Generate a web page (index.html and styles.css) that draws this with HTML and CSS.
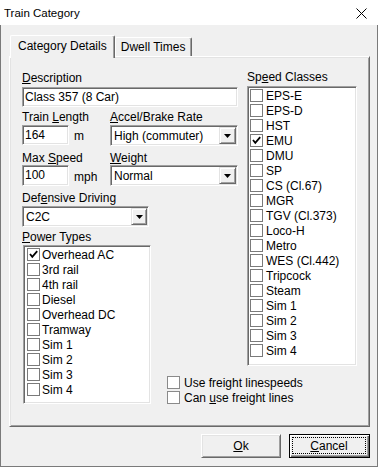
FILE: index.html
```html
<!DOCTYPE html>
<html lang="en">
<head>
    <meta charset="UTF-8">
    <title>Train Category</title>
    <link rel="stylesheet" href="styles.css">
</head>
<body>
    <div class="window">
        <div class="titlebar">
            <span class="title">Train Category</span>
            <svg class="close" width="11" height="11" viewBox="0 0 11 11">
                <path d="M0.5 0.5 L10.5 10.5 M10.5 0.5 L0.5 10.5" stroke="#000" stroke-width="1" fill="none"/>
            </svg>
        </div>

        <div class="client">
            <div class="tabs">
                <div class="tab active">Category Details</div>
                <div class="tab">Dwell Times</div>
            </div>

            <div class="page">
                <div class="col-left">
                    <div class="label"><u>D</u>escription</div>
                    <div class="edit desc">Class 357 (8 Car)</div>

                    <div class="row row-length">
                        <div class="field-short">
                            <div class="label lbl-gap">Train <u>L</u>ength</div>
                            <div class="with-unit">
                                <div class="edit short">164</div>
                                <span class="unit">m</span>
                            </div>
                        </div>
                        <div class="field-wide">
                            <div class="label lbl-gap"><u>A</u>ccel/Brake Rate</div>
                            <div class="combo">
                                <span class="combo-text">High (commuter)</span>
                                <span class="combo-btn"><svg width="7" height="4" viewBox="0 0 7 4"><polygon points="0,0 7,0 3.5,4" fill="#000"/></svg></span>
                            </div>
                        </div>
                    </div>

                    <div class="row row-speed">
                        <div class="field-short">
                            <div class="label">Max <u>S</u>peed</div>
                            <div class="with-unit">
                                <div class="edit short tall">100</div>
                                <span class="unit">mph</span>
                            </div>
                        </div>
                        <div class="field-wide">
                            <div class="label"><u>W</u>eight</div>
                            <div class="combo">
                                <span class="combo-text">Normal</span>
                                <span class="combo-btn"><svg width="7" height="4" viewBox="0 0 7 4"><polygon points="0,0 7,0 3.5,4" fill="#000"/></svg></span>
                            </div>
                        </div>
                    </div>

                    <div class="defensive">
                        <div class="label lbl-gap">Def<u>e</u>nsive Driving</div>
                        <div class="combo small">
                            <span class="combo-text">C2C</span>
                            <span class="combo-btn"><svg width="7" height="4" viewBox="0 0 7 4"><polygon points="0,0 7,0 3.5,4" fill="#000"/></svg></span>
                        </div>
                    </div>

                    <div class="bottom-row">
                        <div class="power">
                            <div class="label lbl-gap"><u>P</u>ower Types</div>
                            <div class="list power-list">
                                <div class="item"><span class="cb"><svg width="11" height="11" viewBox="0 0 11 11"><path d="M2 5 L4.3 7.8 L9.2 2.2" stroke="#000" stroke-width="1.8" fill="none"/></svg></span>Overhead AC</div>
                                <div class="item"><span class="cb"></span>3rd rail</div>
                                <div class="item"><span class="cb"></span>4th rail</div>
                                <div class="item"><span class="cb"></span>Diesel</div>
                                <div class="item"><span class="cb"></span>Overhead DC</div>
                                <div class="item"><span class="cb"></span>Tramway</div>
                                <div class="item"><span class="cb"></span>Sim 1</div>
                                <div class="item"><span class="cb"></span>Sim 2</div>
                                <div class="item"><span class="cb"></span>Sim 3</div>
                                <div class="item"><span class="cb"></span>Sim 4</div>
                            </div>
                        </div>
                        <div class="freight">
                            <div class="option"><span class="cb"></span><span>Use freight linespeeds</span></div>
                            <div class="option"><span class="cb"></span><span>Can <u>u</u>se freight lines</span></div>
                        </div>
                    </div>
                </div>

                <div class="col-right">
                    <div class="label">Sp<u>e</u>ed Classes</div>
                    <div class="list speed-list">
                        <div class="item"><span class="cb"></span>EPS-E</div>
                        <div class="item"><span class="cb"></span>EPS-D</div>
                        <div class="item"><span class="cb"></span>HST</div>
                        <div class="item"><span class="cb"><svg width="11" height="11" viewBox="0 0 11 11"><path d="M2 5 L4.3 7.8 L9.2 2.2" stroke="#000" stroke-width="1.8" fill="none"/></svg></span>EMU</div>
                        <div class="item"><span class="cb"></span>DMU</div>
                        <div class="item"><span class="cb"></span>SP</div>
                        <div class="item"><span class="cb"></span>CS (Cl.67)</div>
                        <div class="item"><span class="cb"></span>MGR</div>
                        <div class="item"><span class="cb"></span>TGV (Cl.373)</div>
                        <div class="item"><span class="cb"></span>Loco-H</div>
                        <div class="item"><span class="cb"></span>Metro</div>
                        <div class="item"><span class="cb"></span>WES (Cl.442)</div>
                        <div class="item"><span class="cb"></span>Tripcock</div>
                        <div class="item"><span class="cb"></span>Steam</div>
                        <div class="item"><span class="cb"></span>Sim 1</div>
                        <div class="item"><span class="cb"></span>Sim 2</div>
                        <div class="item"><span class="cb"></span>Sim 3</div>
                        <div class="item"><span class="cb"></span>Sim 4</div>
                    </div>
                </div>
            </div>

            <div class="buttons">
                <div class="btn ok"><u>O</u>k</div>
                <div class="btn cancel"><span class="focus"><span><u>C</u>ancel</span></span></div>
            </div>
        </div>
    </div>
</body>
</html>
```

FILE: styles.css
```css
* {
    box-sizing: border-box;
}

body {
    margin: 0;
    font-family: 'Liberation Sans', Arial, sans-serif;
    font-size: 12px;
    color: #000;
    background: #f0f0f0;
}

.window {
    width: 378px;
    height: 467px;
    display: flex;
    flex-direction: column;
}

.titlebar {
    height: 25px;
    background: #fff;
    display: flex;
    align-items: center;
    justify-content: space-between;
    padding: 1px 11px 0 4px;
}

.title {
    font-size: 11.5px;
}

.client {
    flex: 1;
    background: #f0f0f0;
    border: 1px solid #7a7a7a;
    border-top: none;
    padding: 10px 7px 0 8px;
}

/* tab strip */
.tabs {
    display: flex;
    align-items: flex-end;
    height: 21px;
    padding-left: 1px;
}

.tab {
    height: 19px;
    padding: 2px 6px 0 5px;
    line-height: 14px;
    background: #f0f0f0;
    border: 1px solid;
    border-color: #fff #696969 transparent #fff;
    border-bottom: none;
    box-shadow: inset -1px 0 0 #a0a0a0;
    border-radius: 2px 2px 0 0;
}

.tab.active {
    height: 23px;
    padding: 3px 7px 0 7px;
    margin-bottom: -2px;
    position: relative;
    z-index: 1;
}

.page {
    height: 371px;
    display: flex;
    gap: 9px;
    padding: 13px 12px 0 12px;
    border: 1px solid;
    border-color: #fff #696969 #696969 #fff;
    box-shadow: inset 1px 1px 0 #e3e3e3, inset -1px -1px 0 #a0a0a0;
}

.col-left {
    width: 216px;
    margin-top: 1px;
}

.col-right {
    width: 112px;
}

.label {
    line-height: 14px;
    white-space: nowrap;
    margin-bottom: 2px;
}

.label.lbl-gap {
    margin-bottom: 1px;
}

.row-speed .label {
    margin-bottom: 0;
}

/* sunken controls */
.edit,
.combo,
.list {
    background: #fff;
    border: 1px solid;
    border-color: #a0a0a0 #fff #fff #a0a0a0;
    box-shadow: inset 1px 1px 0 #696969, inset -1px -1px 0 #e3e3e3;
}

.edit {
    height: 20px;
    line-height: 18px;
    padding: 0 2px;
    white-space: nowrap;
}

.edit.short {
    width: 47px;
}

.edit.tall {
    height: 21px;
    line-height: 19px;
}

.row {
    display: flex;
}

.row-length {
    margin-top: 3px;
}

.row-speed {
    margin-top: 5px;
}

.field-short {
    width: 88px;
}

.field-wide {
    flex: 1;
}

.with-unit {
    display: flex;
    align-items: flex-end;
    gap: 5px;
}

.unit {
    line-height: 15px;
    margin-bottom: 1px;
}

.combo {
    height: 21px;
    display: flex;
    padding: 1px;
}

.combo.small {
    width: 127px;
}

.combo-text {
    flex: 1;
    padding-left: 2px;
    line-height: 19px;
    white-space: nowrap;
}

.combo-btn {
    width: 17px;
    height: 17px;
    display: flex;
    align-items: center;
    justify-content: center;
    background: #f0f0f0;
    border: 1px solid;
    border-color: #e3e3e3 #696969 #696969 #e3e3e3;
    box-shadow: inset 1px 1px 0 #fff, inset -1px -1px 0 #a0a0a0;
}

.combo.small .combo-btn {
    width: 16px;
}

.defensive {
    margin-top: 5px;
}

.bottom-row {
    display: flex;
    align-items: flex-end;
    margin-top: 3px;
}

.power {
    width: 129px;
}

.list {
    padding: 1px 3px 0;
}

.power-list {
    width: 128px;
    height: 159px;
    margin-left: 1px;
}

.speed-list {
    height: 280px;
    padding: 1px 2px 0;
}

.item,
.option {
    display: flex;
    align-items: center;
    height: 15px;
    white-space: nowrap;
}

.cb {
    width: 13px;
    height: 13px;
    flex: none;
    margin-right: 2px;
    background: #fff;
    border: 1px solid #7a7a7a;
    display: flex;
    align-items: center;
    justify-content: center;
}

.speed-list .cb {
    margin-right: 3px;
}

.freight {
    margin-left: 16px;
    margin-bottom: -1px;
}

.option .cb {
    margin-right: 4px;
    border-color: #8a8a8a;
}

/* dialog buttons */
.buttons {
    display: flex;
    justify-content: flex-end;
    gap: 8px;
    margin-top: 7px;
}

.btn {
    width: 80px;
    height: 24px;
    display: flex;
    align-items: center;
    justify-content: center;
    background: #f0f0f0;
    border: 1px solid;
    border-color: #fff #696969 #696969 #fff;
    box-shadow: inset 1px 1px 0 #e3e3e3, inset -1px -1px 0 #a0a0a0;
}

.btn.cancel {
    width: 81px;
    border: 1px solid #000;
    box-shadow: inset 1px 1px 0 #fff, inset -1px -1px 0 #696969, inset -2px -2px 0 #a0a0a0;
    padding: 2px 3px 3px 2px;
    align-items: stretch;
    justify-content: stretch;
}

.focus {
    flex: 1;
    display: flex;
    align-items: center;
    justify-content: center;
    border: 1px dotted #000;
}
```
